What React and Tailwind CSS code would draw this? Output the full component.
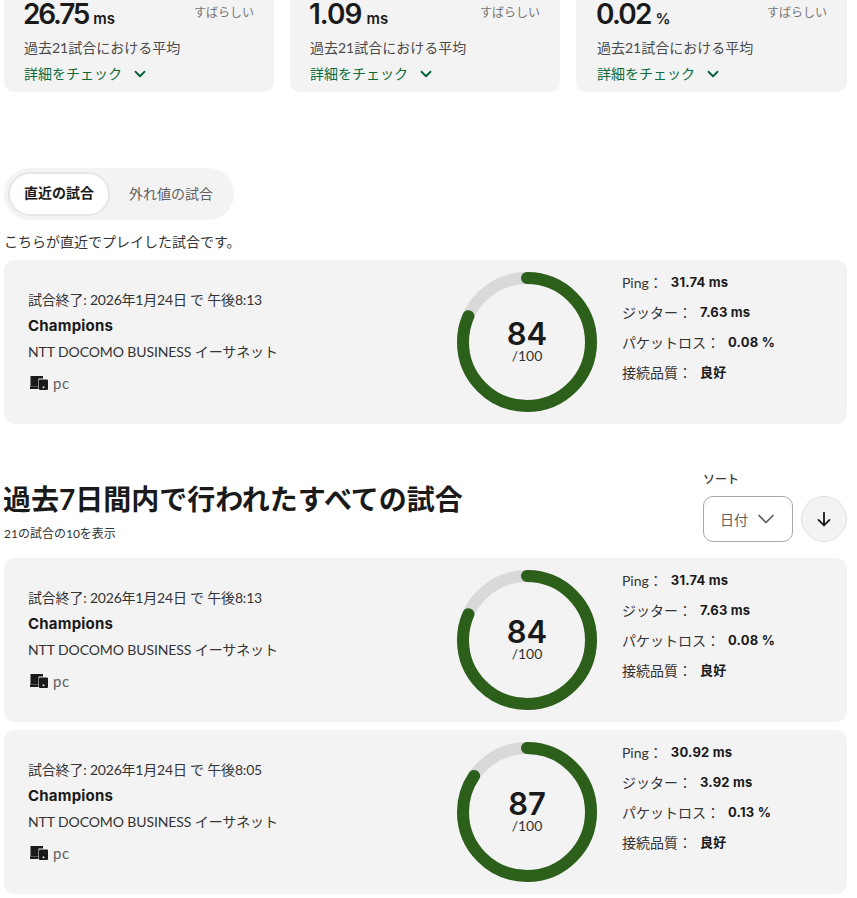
import React from "react";

const F = "font-['Lato','Noto_Sans_CJK_JP',sans-serif]";
const B = "font-['Inter','Noto_Sans_CJK_JP',sans-serif]";

function Chevron({ className, w = 2.4 }) {
  return (
    <svg viewBox="0 0 24 24" fill="none" stroke="currentColor" strokeWidth={w} strokeLinecap="round" strokeLinejoin="round" className={className}>
      <path d="M6 9l6 6 6-6" />
    </svg>
  );
}

function Summary({ value, unit, track, pad = "pl-5" }) {
  return (
    <div className={`bg-[#f3f3f3] rounded-b-[10px] h-[92px] ${pad} pr-5 flex flex-col`}>
      <div className={`${B} flex justify-between h-[27px] items-end`}>
        <div className="flex items-baseline gap-[5px] text-[#1a1a1a] ml-[-1px]">
          <span className={`text-[28px] leading-[26px] font-semibold ${track}`}>{value}</span>
          <span className="text-[15px] leading-none font-semibold">{unit}</span>
        </div>
        <span className="text-[12px] leading-[26px] text-[#757575] self-start">すばらしい</span>
      </div>
      <div className="text-[14px] leading-5 text-[#4a4a4a] mt-[11px]">過去21試合における平均</div>
      <div className="flex items-center gap-[9px] text-[14px] leading-5 text-[#0b6b3a] mt-[6px]">
        <span>詳細をチェック</span>
        <Chevron className="w-[18px] h-[18px] text-[#006038]" />
      </div>
    </div>
  );
}

function Ring({ score }) {
  const r = 64;
  const c = 2 * Math.PI * r;
  return (
    <div className="relative w-[140px] h-[140px] shrink-0">
      <svg viewBox="0 0 140 140" className="w-[140px] h-[140px] -rotate-90">
        <circle cx="70" cy="70" r={r} fill="none" stroke="#d9d9d9" strokeWidth="12" />
        <circle cx="70" cy="70" r={r} fill="none" stroke="#2c5f1a" strokeWidth="12" strokeLinecap="round" strokeDasharray={`${(c * score * 0.97) / 100} ${c}`} />
      </svg>
      <div className="absolute inset-0 flex flex-col items-center justify-center pb-[4px]">
        <span className={`${B} text-[31px] leading-[30px] mt-[1px] font-semibold text-[#1a1a1a]`}>{score}</span>
        <span className="text-[14px] leading-[15px] -mt-[1px] text-[#333333]">/100</span>
      </div>
    </div>
  );
}

function Stat({ label, value }) {
  return (
    <div className="flex items-center h-[30px] text-[14px]">
      <span className="text-[#333333]">{label}：</span>
      <span className={`${B} ml-[8px] text-[13px] leading-[20px] font-bold text-[#1a1a1a] tracking-[0.2px]`}>{value}</span>
    </div>
  );
}

function Match({ time, score, ping, jitter, loss }) {
  return (
    <div className="bg-[#f3f3f3] rounded-[10px] h-[164px] flex pt-2 pb-3">
      <div className="w-[453px] shrink-0 pl-6 pt-1 flex flex-col justify-center">
        <div className="text-[14px] leading-5 text-[#333333] tracking-[-0.2px]">試合終了: 2026年1月24日 で 午後{time}</div>
        <div className={`${B} text-[15px] leading-5 font-bold text-[#1a1a1a] mt-[6px] tracking-[0.2px]`}>Champions</div>
        <div className="text-[14px] leading-5 text-[#333333] mt-[6px] tracking-[-0.1px]">NTT DOCOMO BUSINESS イーサネット</div>
        <div className="flex items-center gap-[5px] mt-[12px] h-5 pb-[2px] pl-[2px]">
          <svg viewBox="0 0 18 14" className="w-[18px] h-[14px]">
            <path d="M0.500 0h12.500v2.500H8.500v8H0.500z" fill="#1a1a1a" />
            <path d="M0 10.500h8.500v2.500H0z" fill="#1a1a1a" />
            <path d="M10 3.500h7a1 1 0 0 1 1 1v8.500a1 1 0 0 1-1 1h-7a1 1 0 0 1-1-1V4.500a1 1 0 0 1 1-1z" fill="#1a1a1a" />
            <rect x="12.700" y="10.500" width="1.700" height="1.700" fill="#f3f3f3" />
          </svg>
          <span className="text-[15px] tracking-[0.5px] text-[#5f5f5f]">pc</span>
        </div>
      </div>
      <div className="mt-1"><Ring score={score} /></div>
      <div className="ml-[25px] -mt-[1px]">
        <Stat label="Ping" value={`${ping} ms`} />
        <Stat label="ジッター" value={`${jitter} ms`} />
        <Stat label="パケットロス" value={`${loss} %`} />
        <Stat label="接続品質" value="良好" />
      </div>
    </div>
  );
}

export default function App() {
  return (
    <div className={`${F} w-[857px] h-[898px] overflow-hidden pl-1 pr-[10px] bg-white`}>
      <div className="grid grid-cols-[270px_270px_1fr] gap-4">
        <Summary value="26.75" unit="ms" track="tracking-[-2.2px]" />
        <Summary value="1.09" unit="ms" track="tracking-[-1px]" />
        <Summary value="0.02" unit="%" track="tracking-[-1.8px]" pad="pl-[21px]" />
      </div>

      <div className="mt-[76px] w-[230px] h-[52px] rounded-full bg-[#f3f3f3] flex items-center px-[4px]">
        <div className="h-[44px] w-[102px] pb-[3px] rounded-full bg-white border-2 border-[#e6e6e6] flex items-center justify-center text-[14px] font-bold text-[#1a1a1a]">直近の試合</div>
        <div className="flex-1 text-center text-[14px] text-[#5f5f5f] pb-[1px] pl-[2px]">外れ値の試合</div>
      </div>
      <p className="mt-[12px] text-[14px] leading-5 text-[#333333] mb-2">こちらが直近でプレイした試合です。</p>

      <Match time="8:13" score={84} ping="31.74" jitter="7.63" loss="0.08" />

      <div className="flex justify-between mt-[44px] h-[90px]">
        <div className="mt-[12px] -ml-[1px]">
          <h2 className="text-[28px] leading-[38px] font-bold text-[#1a1a1a]">過去7日間内で行われたすべての試合</h2>
          <p className="text-[12px] leading-4 text-[#333333] mt-[8px] ml-[1px]">21の試合の10を表示</p>
        </div>
        <div className="pt-1">
          <div className="text-[12px] leading-4 font-medium text-[#333333]">ソート</div>
          <div className="flex gap-2 mt-[8px]">
            <div className="w-[90px] h-[46px] border border-[#a8a8a8] rounded-[10px] flex items-center justify-center gap-[4px] pl-[4px] text-[14px] text-[#5f5f5f]">
              <span>日付</span>
              <Chevron w={1.5} className="w-[28px] h-[28px]" />
            </div>
            <div className="w-[46px] h-[46px] rounded-full bg-[#f3f3f3] border border-[#e0e0e0] flex items-center justify-center text-[#1a1a1a]">
              <svg viewBox="0 0 24 24" fill="none" stroke="currentColor" strokeWidth="2" strokeLinecap="round" strokeLinejoin="round" className="w-[22px] h-[22px]"><path d="M12 5v14M6 13l6 6 6-6" /></svg>
            </div>
          </div>
        </div>
      </div>

      <div className="flex flex-col gap-2">
        <Match time="8:13" score={84} ping="31.74" jitter="7.63" loss="0.08" />
        <Match time="8:05" score={87} ping="30.92" jitter="3.92" loss="0.13" />
      </div>
    </div>
  );
}
